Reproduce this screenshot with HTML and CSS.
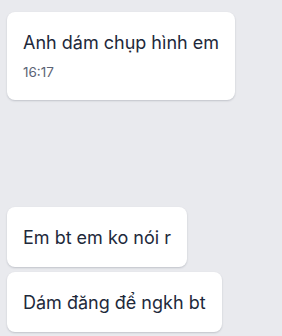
FILE: index.html
```
<!DOCTYPE html>
<html lang="vi">
<head>
    <meta charset="UTF-8">
    <meta name="viewport" content="width=device-width, initial-scale=1.0">
    <title>Chat</title>
    <link rel="stylesheet" href="styles.css">
</head>
<body>

<div class="chat">
    <div class="msg">
        <p class="msg-text">Anh dám chụp hình em</p>
        <span class="msg-time">16:17</span>
    </div>

    <!-- newer messages sit at the bottom -->
    <div class="msg-group">
        <div class="msg">
            <p class="msg-text">Em bt em ko nói r</p>
        </div>
        <div class="msg">
            <p class="msg-text">Dám đăng để ngkh bt</p>
        </div>
    </div>
</div>

</body>
</html>
```

FILE: styles.css
```
/* General page styling */
body {
    font-family: Inter, "Noto Sans", sans-serif;
    margin: 0;
    padding: 0;
    background-color: #e9eaee;
}

.chat {
    display: flex;
    flex-direction: column;
    align-items: flex-start;
    height: 336px;
    box-sizing: border-box;
    padding: 12px 7px 4px;
}

.msg-group {
    display: flex;
    flex-direction: column;
    align-items: flex-start;
    gap: 5px;
    margin-top: auto;
}

/* Message bubble */
.msg {
    background-color: #fff;
    border-radius: 8px;
    box-shadow: 0 1px 2px rgba(30, 41, 59, 0.2);
    padding: 18px 16px 16px;
}

.msg-text {
    margin: 0;
    font-size: 18px;
    line-height: 26px;
    color: #1e293b;
}

.msg-time {
    display: block;
    margin: 7px 0 2px;
    font-size: 13.5px;
    line-height: 19px;
    color: #5b6475;
}
```
